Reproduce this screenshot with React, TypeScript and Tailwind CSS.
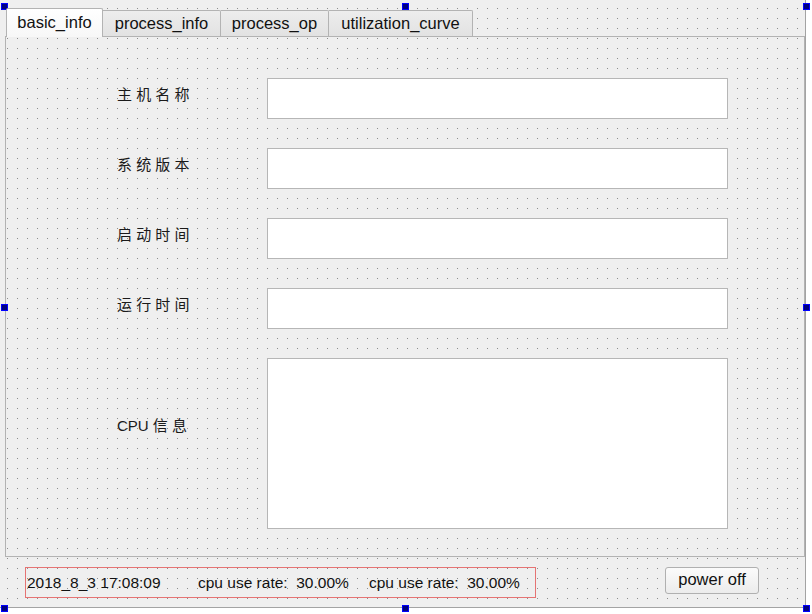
const labelFont = {
  fontFamily: '"Liberation Sans", "Noto Sans CJK SC", sans-serif',
};

function Handle({ className }: { className: string }) {
  return (
    <div
      className={`absolute w-[7px] h-[7px] bg-[#000080] border border-[#0000ff] ${className}`}
    />
  );
}

function FieldRow({ label, tall }: { label: string; tall?: boolean }) {
  return (
    <div className={`flex ${tall ? "items-start" : "items-center"}`}>
      <div
        className={`w-[150px] text-[15px] text-[#1a1a1a] whitespace-pre ${
          tall ? "mt-[57px]" : "-mt-[6px]"
        }`}
      >
        {label}
      </div>
      <div
        className={`w-[461px] bg-white border border-[#b6b6b6] ${
          tall ? "h-[171px]" : "h-[41px]"
        }`}
      />
    </div>
  );
}

export default function App() {
  const tabs = [
    { name: "process_info", w: "w-[118px]" },
    { name: "process_op", w: "w-[108px]" },
    { name: "utilization_curve", w: "w-[144px]" },
  ];

  return (
    <div
      className="relative w-[812px] h-[614px] bg-white overflow-hidden"
      style={labelFont}
    >
      <div className="w-[806px] h-[608px] flex flex-col pt-[8px] bg-[#efefef] border-r border-b border-[#a3a3a3] bg-[radial-gradient(circle_at_0.5px_0.5px,#8c8c8c_0.6px,transparent_0.6px)] bg-[size:10px_10px] bg-[position:7px_8px]">
        {/* Tabs */}
        <div className="flex items-start pl-[6px] h-[28px] relative z-10">
          <div className="w-[97px] h-[29px] pt-[1px] text-center text-[16.5px] text-[#111] bg-gradient-to-b from-white to-[#f7f7f7] border-t border-l border-r border-[#b3b3b3] rounded-t-[2px]">
            basic_info
          </div>
          {tabs.map((t) => (
            <div
              key={t.name}
              className={`${t.w} h-[26px] mt-[2px] text-center text-[16.5px] text-[#111] bg-gradient-to-b from-[#ededed] to-[#e2e2e2] border-t border-r border-[#b3b3b3] rounded-tr-[2px]`}
            >
              {t.name}
            </div>
          ))}
        </div>

        {/* Tab pane */}
        <div className="ml-[5px] w-[800px] h-[521px] border border-[#b3b3b3] pl-[111px] pt-[41px] flex flex-col gap-[29px]">
          <FieldRow label="主 机 名 称" />
          <FieldRow label="系 统 版 本" />
          <FieldRow label="启 动 时 间" />
          <FieldRow label="运 行 时 间" />
          <FieldRow label="CPU 信 息" tall />
        </div>

        {/* Status bar */}
        <div className="flex items-start pt-[10px] pl-[25px] text-[15.5px] text-[#111]">
          <div className="w-[511px] h-[31px] border border-[#e57373] flex items-center whitespace-pre">
            <span className="w-[172px] pl-[1px]">2018_8_3 17:08:09</span>
            <span className="w-[171px]">cpu use rate:  30.00%</span>
            <span>cpu use rate:  30.00%</span>
          </div>
          <button className="ml-[129px] w-[94px] h-[27px] text-[16.5px] border border-[#b0b0b0] rounded-[3px] bg-gradient-to-b from-[#fbfbfb] to-[#ececec] flex items-center justify-center pb-[2px]">
            power off
          </button>
        </div>
      </div>

      {/* Designer selection handles */}
      <Handle className="left-[1px] top-[3px]" />
      <Handle className="left-[402px] top-[3px]" />
      <Handle className="left-[803px] top-[3px]" />
      <Handle className="left-[1px] top-[304px]" />
      <Handle className="left-[803px] top-[304px]" />
      <Handle className="left-[1px] top-[605px]" />
      <Handle className="left-[402px] top-[605px]" />
      <Handle className="left-[803px] top-[605px]" />
    </div>
  );
}
